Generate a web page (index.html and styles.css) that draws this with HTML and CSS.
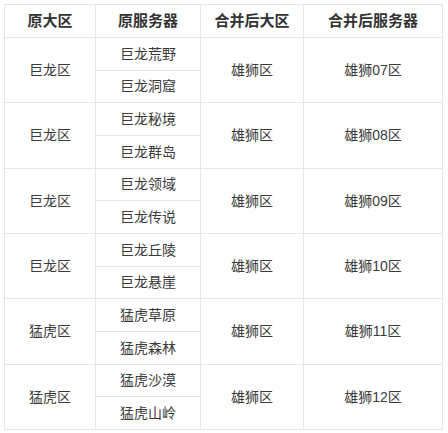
FILE: index.html
```html
<!DOCTYPE html>
<html lang="zh-CN">
<head>
<meta charset="utf-8">
<link rel="stylesheet" href="styles.css">
</head>
<body>
<table class="merge">
  <colgroup>
    <col class="c1"><col class="c2"><col class="c3"><col class="c4">
  </colgroup>
  <thead>
    <tr class="head"><th>原大区</th><th>原服务器</th><th>合并后大区</th><th>合并后服务器</th></tr>
  </thead>
  <tbody>
    <tr><td rowspan="2">巨龙区</td><td>巨龙荒野</td><td rowspan="2">雄狮区</td><td rowspan="2">雄狮07区</td></tr>
    <tr><td>巨龙洞窟</td></tr>
    <tr><td rowspan="2">巨龙区</td><td>巨龙秘境</td><td rowspan="2">雄狮区</td><td rowspan="2">雄狮08区</td></tr>
    <tr><td>巨龙群岛</td></tr>
    <tr><td rowspan="2">巨龙区</td><td>巨龙领域</td><td rowspan="2">雄狮区</td><td rowspan="2">雄狮09区</td></tr>
    <tr><td>巨龙传说</td></tr>
    <tr><td rowspan="2">巨龙区</td><td>巨龙丘陵</td><td rowspan="2">雄狮区</td><td rowspan="2">雄狮10区</td></tr>
    <tr><td>巨龙悬崖</td></tr>
    <tr><td rowspan="2">猛虎区</td><td>猛虎草原</td><td rowspan="2">雄狮区</td><td rowspan="2">雄狮11区</td></tr>
    <tr><td>猛虎森林</td></tr>
    <tr><td rowspan="2">猛虎区</td><td>猛虎沙漠</td><td rowspan="2">雄狮区</td><td rowspan="2">雄狮12区</td></tr>
    <tr><td>猛虎山岭</td></tr>
  </tbody>
</table>
</body>
</html>
```
FILE: styles.css
```css
html, body {
  margin: 0;
  padding: 0;
  background: #ffffff;
}
body {
  padding: 4px 0 0 4px;
  font-family: "Liberation Sans", "Noto Sans CJK SC", sans-serif;
  font-size: 14px;
  color: #3a3a3a;
}
.merge {
  border-collapse: collapse;
  width: 438px;
  table-layout: fixed;
}
.c1 { width: 91px; }
.c2 { width: 105px; }
.c3 { width: 103px; }
.c4 { width: 139px; }
.merge th,
.merge td {
  border: 1px solid #e2e8e8;
  text-align: center;
  vertical-align: middle;
  padding: 0;
  line-height: 18px;
}
.merge th {
  font-weight: bold;
  font-size: 15px;
  color: #333333;
  height: 32px;
}
.merge tbody tr {
  height: 32.67px;
}
```
